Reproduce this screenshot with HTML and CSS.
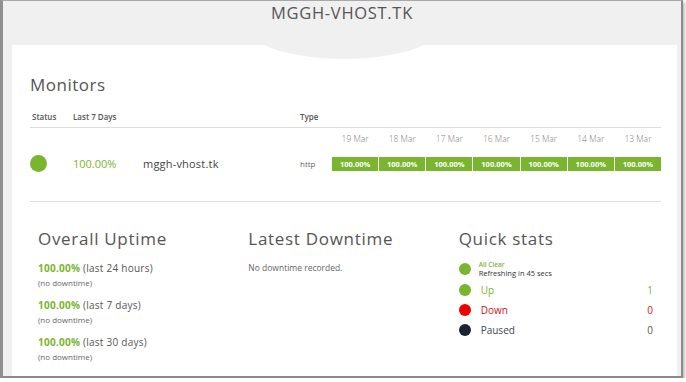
FILE: index.html
```html
<!DOCTYPE html>
<html lang="en">
<head>
    <meta charset="UTF-8">
    <title>MGGH-VHOST.TK status</title>
    <meta name="viewport" content="width=device-width, initial-scale=1">
    <link rel="stylesheet" href="styles.css">
</head>
<body>

<div class="window">
    <header class="site-header">
        <h1>MGGH-VHOST.TK</h1>
    </header>

    <main class="card">
        <h2 class="monitors-title">Monitors</h2>

        <div class="table-head">
            <span class="head-status">Status</span>
            <span>Last 7 Days</span>
            <span></span>
            <span>Type</span>
        </div>

        <div class="monitor-row">
            <div class="days">
                <span>19 Mar</span>
                <span>18 Mar</span>
                <span>17 Mar</span>
                <span>16 Mar</span>
                <span>15 Mar</span>
                <span>14 Mar</span>
                <span>13 Mar</span>
            </div>
            <span class="dot dot-up"></span>
            <span class="row-uptime">100.00%</span>
            <span class="row-name">mggh-vhost.tk</span>
            <span class="row-type">http</span>
            <div class="bars">
                <span>100.00%</span>
                <span>100.00%</span>
                <span>100.00%</span>
                <span>100.00%</span>
                <span>100.00%</span>
                <span>100.00%</span>
                <span>100.00%</span>
            </div>
        </div>

        <div class="summary">
            <section class="summary-col">
                <h3>Overall Uptime</h3>
                <div class="uptime-item">
                    <p><strong>100.00%</strong> (last 24 hours)</p>
                    <small>(no downtime)</small>
                </div>
                <div class="uptime-item">
                    <p><strong>100.00%</strong> (last 7 days)</p>
                    <small>(no downtime)</small>
                </div>
                <div class="uptime-item">
                    <p><strong>100.00%</strong> (last 30 days)</p>
                    <small>(no downtime)</small>
                </div>
            </section>

            <section class="summary-col">
                <h3>Latest Downtime</h3>
                <p class="no-downtime">No downtime recorded.</p>
            </section>

            <section class="summary-col">
                <h3>Quick stats</h3>
                <div class="stat-clear">
                    <span class="dot small dot-up"></span>
                    <div>
                        <div class="clear-label">All Clear</div>
                        <div class="refresh">Refreshing in 45 secs</div>
                    </div>
                </div>
                <div class="stat up">
                    <span class="dot small dot-up"></span>
                    <span class="stat-name">Up</span>
                    <span class="stat-count">1</span>
                </div>
                <div class="stat down">
                    <span class="dot small dot-down"></span>
                    <span class="stat-name">Down</span>
                    <span class="stat-count">0</span>
                </div>
                <div class="stat paused">
                    <span class="dot small dot-paused"></span>
                    <span class="stat-name">Paused</span>
                    <span class="stat-count">0</span>
                </div>
            </section>
        </div>
    </main>
</div>

</body>
</html>
```

FILE: styles.css
```css
body {
    font-family: 'Open Sans', 'Liberation Sans', sans-serif;
    background: #fff;
    margin: 0;
    padding: 0;
    color: #555;
}

.window {
    width: 678px;
    height: 375px;
    background: #f0f0f0;
    border-top: 1px solid #a8a8a8;
    border-left: 3px solid #8f8f8f;
    border-right: 2px solid #8a8a8a;
    border-bottom: 2px solid #8a8a8a;
    box-shadow: 2px 2px 3px rgba(0, 0, 0, 0.25);
    overflow: hidden;
}

.site-header {
    position: relative;
    z-index: 1;
    height: 44px;
    text-align: center;
}

.site-header::after {
    content: "";
    position: absolute;
    left: 50%;
    top: -12px;
    width: 200px;
    height: 70px;
    margin-left: -98px;
    border-radius: 50%;
    background: #f0f0f0;
    z-index: -1;
}

.site-header h1 {
    margin: 0;
    font-size: 16.5px;
    line-height: 24px;
    font-weight: 400;
    color: #555;
    letter-spacing: 0.7px;
}

.card {
    background: #fff;
    margin: 0 4px 0 9px;
    height: 331px;
    padding: 0 16px 0 18px;
}

.monitors-title {
    margin: 0;
    padding-top: 28px;
    font-size: 17px;
    line-height: 24px;
    font-weight: 400;
    color: #555;
    letter-spacing: 0.5px;
}

.table-head, .monitor-row {
    display: grid;
    grid-template-columns: 43px 70px 157px 32px 1fr;
}

.table-head {
    margin-top: 13px;
    padding-bottom: 3px;
    border-bottom: 1px solid #ddd;
    font-size: 8px;
    line-height: 14px;
    font-weight: 600;
    color: #555;
}

.head-status {
    padding-left: 2px;
}

.monitor-row {
    grid-template-rows: auto auto;
    align-items: center;
    padding-top: 4px;
    padding-bottom: 29px;
    border-bottom: 1px solid #ddd;
}

.monitor-row > * {
    grid-row: 2;
}

.monitor-row > .days {
    grid-column: 5;
    grid-row: 1;
}

.days {
    display: flex;
    gap: 1px;
    margin-bottom: 10px;
    font-size: 8.5px;
    line-height: 13px;
    font-weight: 300;
    color: #808080;
}

.days span, .bars span {
    flex: 1;
    text-align: center;
}

.dot {
    display: block;
    width: 17px;
    height: 17px;
    border-radius: 50%;
}

.dot.small {
    width: 12px;
    height: 12px;
}

.dot-up {
    background: #7ab52f;
}

.dot-down {
    background: #ee0000;
}

.dot-paused {
    background: #1a2330;
}

.row-uptime {
    font-size: 11px;
    color: #7ab52f;
}

.row-name {
    font-size: 11px;
    color: #444;
    letter-spacing: 0.2px;
}

.row-type {
    font-size: 8px;
    color: #666;
}

.bars {
    display: flex;
    gap: 1px;
}

.bars span {
    background: #7ab52f;
    color: #fff;
    font-size: 7.5px;
    font-weight: 700;
    line-height: 14px;
}

.summary {
    display: grid;
    grid-template-columns: repeat(3, 1fr);
    padding-top: 25px;
}

.summary-col {
    padding: 0 8px;
}

.summary-col h3 {
    margin: 0 0 10px;
    font-size: 17px;
    line-height: 24px;
    font-weight: 400;
    color: #555;
    letter-spacing: 0.7px;
}

.uptime-item {
    margin-bottom: 9px;
}

.uptime-item p {
    margin: 0;
    font-size: 10px;
    line-height: 14px;
    color: #555;
    letter-spacing: 0.25px;
}

.uptime-item strong {
    color: #7ab52f;
}

.uptime-item small {
    display: block;
    margin-top: 2px;
    font-size: 8px;
    line-height: 12px;
    color: #666;
}

.no-downtime {
    margin: 0;
    font-size: 8.5px;
    line-height: 14px;
    color: #666;
}

.stat-clear {
    display: flex;
    align-items: center;
    gap: 8px;
    margin-top: 0;
    margin-bottom: 3px;
}

.clear-label {
    font-size: 6.5px;
    font-weight: 600;
    color: #7ab52f;
    line-height: 8px;
}

.refresh {
    font-size: 7.5px;
    color: #333;
    line-height: 8px;
}

.stat {
    display: flex;
    align-items: center;
    height: 20px;
    font-size: 10px;
}

.stat-name {
    margin-left: 10px;
    flex: 1;
}

.up .stat-name, .up .stat-count {
    color: #7ab52f;
}

.down .stat-name, .down .stat-count {
    color: #d0112b;
}

.paused .stat-name {
    color: #3b4a5a;
}

.paused .stat-count {
    color: #555;
}
```
